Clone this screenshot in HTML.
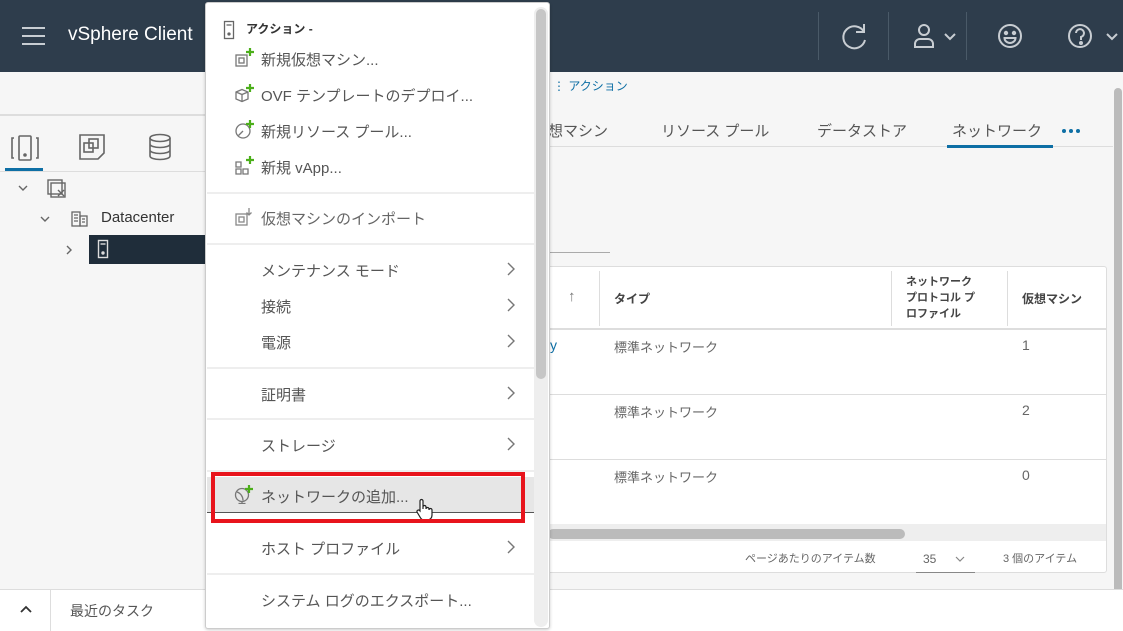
<!DOCTYPE html>
<html><head><meta charset="utf-8"><style>
*{box-sizing:border-box;margin:0;padding:0}
body{width:1123px;height:631px;overflow:hidden;background:#f6f6f6;font-family:"Liberation Sans","Noto Sans CJK JP",sans-serif;position:relative;color:#555}
.abs{position:absolute}
.hdr{left:0;top:0;width:1123px;height:72px;background:#2e3d4c}
.t{position:absolute;white-space:nowrap}
.menu{left:205px;top:2px;width:345px;height:627px;background:#fff;border:1px solid #ccc;border-radius:3px;box-shadow:0 1px 3px rgba(0,0,0,.2)}
.mi{position:absolute;left:55px;font-size:15px;color:#555;white-space:nowrap}
.sep{position:absolute;left:1px;width:328px;height:2px;background:#eee}
.chev{position:absolute;left:300px;width:10px;height:16px}
.ic{position:absolute;left:29px;width:19px;height:19px}
</style></head><body>
<div class="abs hdr">
 <div class="abs" style="left:22px;top:27px;width:23px;height:2px;background:#c8cdd2;box-shadow:0 8px 0 #c8cdd2,0 16px 0 #c8cdd2"></div>
 <div class="t" style="left:68px;top:24px;font-size:19px;color:#fff">vSphere Client</div>
 <div class="abs" style="left:818px;top:12px;width:1px;height:48px;background:#4a5a68"></div>
 <div class="abs" style="left:888px;top:12px;width:1px;height:48px;background:#4a5a68"></div>
 <div class="abs" style="left:966px;top:12px;width:1px;height:48px;background:#4a5a68"></div>
 <svg class="abs" style="left:836px;top:20px" width="34" height="34" viewBox="0 0 34 34" fill="none" stroke="#c8cdd2" stroke-width="2"><path d="M28 12A11 11 0 1 0 29 20"/><path d="M28 4v8h-8"/></svg>
 <svg class="abs" style="left:910px;top:22px" width="50" height="28" viewBox="0 0 50 28" fill="none" stroke="#c8cdd2" stroke-width="2"><circle cx="14" cy="8" r="5"/><path d="M5 25v-3a5 5 0 0 1 5-5h8a5 5 0 0 1 5 5v3z"/><path d="M35 12l5 5 5-5"/></svg>
 <svg class="abs" style="left:996px;top:22px" width="28" height="28" viewBox="0 0 28 28" fill="none" stroke="#c8cdd2" stroke-width="2"><circle cx="14" cy="14" r="11"/><circle cx="10" cy="11" r="1.2" fill="#c8cdd2"/><circle cx="18" cy="11" r="1.2" fill="#c8cdd2"/><path d="M8.5 16h11a5.5 5 0 0 1-11 0z"/></svg>
 <svg class="abs" style="left:1066px;top:22px" width="52" height="28" viewBox="0 0 52 28" fill="none" stroke="#c8cdd2" stroke-width="2"><circle cx="14" cy="14" r="11"/><path d="M10 11a4 4 0 1 1 5 4v3"/><circle cx="15" cy="21" r="1" fill="#c8cdd2"/><path d="M41 12l5 5 5-5"/></svg>
</div>
<!-- left panel -->
<div class="abs" style="left:0;top:114px;width:205px;height:2px;background:#ddd"></div>
<svg class="abs" style="left:10px;top:134px" width="30" height="28" viewBox="0 0 30 28" fill="none" stroke="#666" stroke-width="1.6"><path d="M4 4H2v20h2M26 4h2v20h-2"/><rect x="9" y="2" width="12" height="24" rx="1"/><circle cx="15" cy="21" r="1" fill="#666"/></svg>
<div class="abs" style="left:5px;top:168px;width:38px;height:3px;background:#0e6fa5"></div>
<svg class="abs" style="left:78px;top:133px" width="28" height="28" viewBox="0 0 28 28" fill="none" stroke="#666" stroke-width="1.6"><path d="M2 2h24v18l-6 6H2z"/><rect x="6" y="10" width="9" height="9"/><rect x="11" y="6" width="9" height="9"/></svg>
<svg class="abs" style="left:147px;top:133px" width="26" height="28" viewBox="0 0 26 28" fill="none" stroke="#666" stroke-width="1.6"><ellipse cx="13" cy="5" rx="10" ry="3.5"/><path d="M3 5v18c0 2 4.5 3.5 10 3.5s10-1.5 10-3.5V5M3 11c0 2 4.5 3.5 10 3.5S23 13 23 11M3 17c0 2 4.5 3.5 10 3.5S23 19 23 17"/></svg>
<div class="abs" style="left:0;top:171px;width:205px;height:1px;background:#ddd"></div>
<svg class="abs" style="left:17px;top:184px" width="12" height="8" viewBox="0 0 12 8" fill="none" stroke="#666" stroke-width="1.4"><path d="M2 2l4 4 4-4"/></svg>
<svg class="abs" style="left:46px;top:178px" width="22" height="22" viewBox="0 0 22 22" fill="none" stroke="#666" stroke-width="1.4"><rect x="2" y="2" width="14" height="14"/><rect x="5" y="5" width="14" height="14"/><path d="M12 12l6 6M18 12l-6 6"/></svg>
<svg class="abs" style="left:39px;top:215px" width="12" height="8" viewBox="0 0 12 8" fill="none" stroke="#666" stroke-width="1.4"><path d="M2 2l4 4 4-4"/></svg>
<svg class="abs" style="left:70px;top:210px" width="20" height="18" viewBox="0 0 20 18" fill="none" stroke="#666" stroke-width="1.3"><rect x="2" y="2" width="8" height="14"/><rect x="10" y="6" width="7" height="10"/><path d="M4 5h4M4 8h4M4 11h4M12 9h3M12 12h3"/></svg>
<div class="t" style="left:101px;top:209px;font-size:15px;color:#333">Datacenter</div>
<svg class="abs" style="left:65px;top:244px" width="8" height="12" viewBox="0 0 8 12" fill="none" stroke="#666" stroke-width="1.4"><path d="M2 2l4 4-4 4"/></svg>
<div class="abs" style="left:89px;top:235px;width:116px;height:29px;background:#1f2d3a"></div>
<svg class="abs" style="left:97px;top:239px" width="12" height="20" viewBox="0 0 12 20" fill="none" stroke="#ddd" stroke-width="1.4"><rect x="1.5" y="1.5" width="9" height="17"/><path d="M3.5 5h5"/><circle cx="6" cy="14" r="1" fill="#ddd"/></svg>
<!-- main area -->
<div class="t" style="left:553px;top:77px;font-size:12px;color:#0e6fa5">⋮ アクション</div>
<div class="t" style="left:548px;top:120px;font-size:15px;color:#555">想マシン</div>
<div class="t" style="left:661px;top:120px;font-size:15px;color:#555">リソース プール</div>
<div class="t" style="left:817px;top:120px;font-size:15px;color:#555">データストア</div>
<div class="t" style="left:952px;top:120px;font-size:15px;color:#555">ネットワーク</div>
<div class="abs" style="left:1062px;top:129px;width:4px;height:4px;border-radius:2px;background:#0e6fa5;box-shadow:7px 0 0 #0e6fa5,14px 0 0 #0e6fa5"></div>
<div class="abs" style="left:548px;top:146px;width:565px;height:1px;background:#ddd"></div>
<div class="abs" style="left:947px;top:145px;width:106px;height:3px;background:#0e6fa5"></div>
<div class="abs" style="left:548px;top:252px;width:62px;height:1px;background:#aaa"></div>
<div class="abs" style="left:1114px;top:88px;width:8px;height:540px;background:#bbb;border-radius:4px"></div>
<!-- table -->
<div class="abs" style="left:540px;top:266px;width:567px;height:307px;background:#fff;border:1px solid #ddd;border-radius:3px"></div>
<div class="abs" style="left:541px;top:328px;width:565px;height:2px;background:#ddd"></div>
<div class="abs" style="left:599px;top:271px;width:1px;height:55px;background:#ddd"></div>
<div class="abs" style="left:891px;top:271px;width:1px;height:55px;background:#ddd"></div>
<div class="abs" style="left:1007px;top:271px;width:1px;height:55px;background:#ddd"></div>
<div class="t" style="left:568px;top:288px;font-size:15px;color:#777">↑</div>
<div class="t" style="left:614px;top:290px;font-size:12px;color:#444;font-weight:bold">タイプ</div>
<div class="t" style="left:906px;top:274px;font-size:11px;line-height:16px;color:#444;font-weight:bold">ネットワーク<br>プロトコル プ<br>ロファイル</div>
<div class="t" style="left:1022px;top:290px;font-size:12px;color:#444;font-weight:bold">仮想マシン</div>
<div class="t" style="left:614px;top:337px;font-size:13px;color:#666">標準ネットワーク</div>
<div class="t" style="left:1022px;top:337px;font-size:14px;color:#666">1</div>
<div class="t" style="left:550px;top:337px;font-size:14px;color:#0e6fa5">y</div>
<div class="abs" style="left:541px;top:394px;width:565px;height:1px;background:#ddd"></div>
<div class="t" style="left:614px;top:402px;font-size:13px;color:#666">標準ネットワーク</div>
<div class="t" style="left:1022px;top:402px;font-size:14px;color:#666">2</div>
<div class="abs" style="left:541px;top:459px;width:565px;height:1px;background:#ddd"></div>
<div class="t" style="left:614px;top:467px;font-size:13px;color:#666">標準ネットワーク</div>
<div class="t" style="left:1022px;top:467px;font-size:14px;color:#666">0</div>
<div class="abs" style="left:541px;top:524px;width:565px;height:17px;background:#eee"></div>
<div class="abs" style="left:548px;top:529px;width:357px;height:10px;background:#bbb;border-radius:5px"></div>
<div class="t" style="left:745px;top:550px;font-size:11px;color:#666">ページあたりのアイテム数</div>
<div class="t" style="left:923px;top:552px;font-size:12px;color:#666">35</div>
<svg class="abs" style="left:955px;top:556px" width="10" height="7" viewBox="0 0 10 7" fill="none" stroke="#888" stroke-width="1.2"><path d="M1 1l4 4 4-4"/></svg>
<div class="abs" style="left:916px;top:572px;width:59px;height:1px;background:#888"></div>
<div class="t" style="left:1003px;top:550px;font-size:11px;color:#666">3 個のアイテム</div>
<!-- bottom bar -->
<div class="abs" style="left:0;top:589px;width:1123px;height:42px;background:#fff;border-top:1px solid #ddd"></div>
<div class="abs" style="left:50px;top:590px;width:1px;height:41px;background:#ddd"></div>
<svg class="abs" style="left:19px;top:605px" width="14" height="9" viewBox="0 0 14 9" fill="none" stroke="#333" stroke-width="1.8"><path d="M2 7l5-5 5 5"/></svg>
<div class="t" style="left:70px;top:601px;font-size:14px;color:#555">最近のタスク</div>
<!-- menu -->
<div class="abs menu">
 <div class="abs" style="left:328px;top:4px;width:14px;height:620px;background:#eee;border-radius:7px"></div>
 <div class="abs" style="left:330px;top:6px;width:10px;height:370px;background:#c6c6c6;border-radius:5px"></div>
 <svg class="abs" style="left:17px;top:17px" width="12" height="20" viewBox="0 0 12 20" fill="none" stroke="#666" stroke-width="1.3"><rect x="1.5" y="1.5" width="9" height="17"/><path d="M3.5 5h5"/><circle cx="6" cy="14" r="1" fill="#666"/></svg>
 <div class="t" style="left:40px;top:17px;font-size:12px;color:#333;font-weight:bold">アクション -</div>
 <svg class="ic" style="top:45px" viewBox="0 0 19 19" fill="none" stroke="#777" stroke-width="1.3"><rect x="1" y="7" width="11" height="11"/><rect x="4" y="10" width="5" height="5"/><path d="M15 0v8M11 4h8" stroke="#4caf1a" stroke-width="2.2"/></svg>
 <div class="mi" style="top:46px">新規仮想マシン...</div>
 <svg class="ic" style="top:81px" viewBox="0 0 19 19" fill="none" stroke="#777" stroke-width="1.3"><path d="M1 8l6-2.5 6 2.5v7l-6 2.5-6-2.5z M1 8l6 2.5 6-2.5M7 10.5v7"/><path d="M15 0v8M11 4h8" stroke="#4caf1a" stroke-width="2.2"/></svg>
 <div class="mi" style="top:82px">OVF テンプレートのデプロイ...</div>
 <svg class="ic" style="top:117px" viewBox="0 0 19 19" fill="none" stroke="#777" stroke-width="1.3"><circle cx="8" cy="11" r="7"/><path d="M8 11l-4.5 4.5"/><path d="M15 0v8M11 4h8" stroke="#4caf1a" stroke-width="2.2"/></svg>
 <div class="mi" style="top:118px">新規リソース プール...</div>
 <svg class="ic" style="top:153px" viewBox="0 0 19 19" fill="none" stroke="#777" stroke-width="1.3"><path d="M1 6h5v5H1zM1 13h5v5H1zM8 13h5v5H8z"/><path d="M15 0v8M11 4h8" stroke="#4caf1a" stroke-width="2.2"/></svg>
 <div class="mi" style="top:154px">新規 vApp...</div>
 <div class="sep" style="top:189px"></div>
 <svg class="ic" style="top:204px" viewBox="0 0 19 19" fill="none" stroke="#888" stroke-width="1.3"><rect x="1" y="7" width="11" height="11"/><rect x="4" y="10" width="5" height="5"/><path d="M14 1v7M11.5 5.5l2.5 2.5 2.5-2.5"/></svg>
 <div class="mi" style="top:205px;color:#666">仮想マシンのインポート</div>
 <div class="sep" style="top:240px"></div>
 <div class="mi" style="top:257px">メンテナンス モード</div><svg class="chev" style="top:258px" viewBox="0 0 10 16" fill="none" stroke="#777" stroke-width="1.4"><path d="M2 2l6 6-6 6"/></svg>
 <div class="mi" style="top:293px">接続</div><svg class="chev" style="top:294px" viewBox="0 0 10 16" fill="none" stroke="#777" stroke-width="1.4"><path d="M2 2l6 6-6 6"/></svg>
 <div class="mi" style="top:329px">電源</div><svg class="chev" style="top:330px" viewBox="0 0 10 16" fill="none" stroke="#777" stroke-width="1.4"><path d="M2 2l6 6-6 6"/></svg>
 <div class="sep" style="top:364px"></div>
 <div class="mi" style="top:381px">証明書</div><svg class="chev" style="top:382px" viewBox="0 0 10 16" fill="none" stroke="#777" stroke-width="1.4"><path d="M2 2l6 6-6 6"/></svg>
 <div class="sep" style="top:415px"></div>
 <div class="mi" style="top:432px">ストレージ</div><svg class="chev" style="top:433px" viewBox="0 0 10 16" fill="none" stroke="#777" stroke-width="1.4"><path d="M2 2l6 6-6 6"/></svg>
 <div class="sep" style="top:467px"></div>
 <div class="abs" style="left:1px;top:474px;width:327px;height:36px;background:#e6e6e6;border-bottom:1px solid #555"></div>
 <svg class="ic" style="top:482px;left:28px" viewBox="0 0 19 19" fill="none" stroke="#777" stroke-width="1.3"><circle cx="8" cy="10" r="6.5"/><path d="M3 7c3.5 1 6 4.5 6 8.5M8 16.5v2M4.5 18.5h7"/><path d="M15 0v8M11 4h8" stroke="#4caf1a" stroke-width="2.2"/></svg>
 <div class="mi" style="top:483px">ネットワークの追加...</div>
 <svg class="abs" style="left:209px;top:495px" width="18" height="24" viewBox="0 0 18 24" fill="#fff" stroke="#222" stroke-width="1.2"><path d="M5 13V3a1.5 1.5 0 0 1 3 0v8V9a1.5 1.5 0 0 1 3 0v2a1.5 1.5 0 0 1 3 0v1a1.5 1.5 0 0 1 3 0v5c0 3-2 5-5 5H9c-2 0-3-1-4-3l-3-5a1.5 1.5 0 0 1 2.5-1.5z"/></svg>
 <div class="mi" style="top:535px">ホスト プロファイル</div><svg class="chev" style="top:536px" viewBox="0 0 10 16" fill="none" stroke="#777" stroke-width="1.4"><path d="M2 2l6 6-6 6"/></svg>
 <div class="sep" style="top:570px"></div>
 <div class="mi" style="top:587px">システム ログのエクスポート...</div>
</div>
<div class="abs" style="left:211px;top:472px;width:314px;height:51px;border:4px solid #e8141c"></div>
</body></html>
